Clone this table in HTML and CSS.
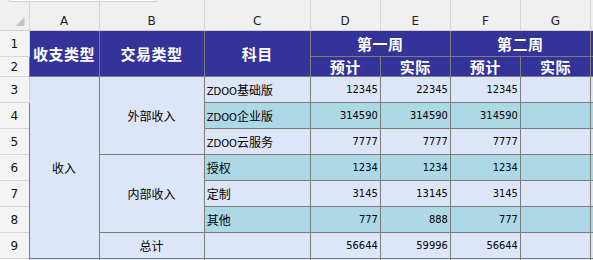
FILE: index.html
```html
<!DOCTYPE html>
<html lang="zh-CN">
<head>
<meta charset="utf-8">
<title>收支表</title>
<link rel="stylesheet" href="styles.css">
</head>
<body>
<div class="sheet">
  <div class="namebox"></div>
  <table class="grid">
    <colgroup>
      <col class="w-rh"><col class="w-a"><col class="w-b"><col class="w-c"><col class="w-n"><col class="w-n"><col class="w-n"><col class="w-n"><col class="w-n">
    </colgroup>
    <thead>
      <tr class="colhead">
        <th class="corner"><div class="corner-in"><span class="tri"></span></div></th>
        <th>A</th><th>B</th><th>C</th><th>D</th><th>E</th><th>F</th><th>G</th><th></th>
      </tr>
    </thead>
    <tbody>
      <tr class="r1">
        <th class="rh">1</th>
        <td class="hd" rowspan="2">收支类型</td>
        <td class="hd" rowspan="2">交易类型</td>
        <td class="hd" rowspan="2">科目</td>
        <td class="hd" colspan="2">第一周</td>
        <td class="hd" colspan="2">第二周</td>
        <td class="hd"></td>
      </tr>
      <tr class="r2">
        <th class="rh">2</th>
        <td class="hd">预计</td><td class="hd">实际</td><td class="hd">预计</td><td class="hd">实际</td><td class="hd"></td>
      </tr>
      <tr class="row lav">
        <th class="rh">3</th>
        <td class="mg" rowspan="7">收入</td>
        <td class="mg" rowspan="3">外部收入</td>
        <td class="t"><span class="lat">ZDOO</span>基础版</td>
        <td class="n">12345</td><td class="n">22345</td><td class="n">12345</td><td></td><td></td>
      </tr>
      <tr class="row blu">
        <th class="rh">4</th>
        <td class="t"><span class="lat">ZDOO</span>企业版</td>
        <td class="n">314590</td><td class="n">314590</td><td class="n">314590</td><td></td><td></td>
      </tr>
      <tr class="row lav">
        <th class="rh">5</th>
        <td class="t"><span class="lat">ZDOO</span>云服务</td>
        <td class="n">7777</td><td class="n">7777</td><td class="n">7777</td><td></td><td></td>
      </tr>
      <tr class="row blu">
        <th class="rh">6</th>
        <td class="mg" rowspan="3">内部收入</td>
        <td class="t">授权</td>
        <td class="n">1234</td><td class="n">1234</td><td class="n">1234</td><td></td><td></td>
      </tr>
      <tr class="row lav">
        <th class="rh">7</th>
        <td class="t">定制</td>
        <td class="n">3145</td><td class="n">13145</td><td class="n">3145</td><td></td><td></td>
      </tr>
      <tr class="row blu">
        <th class="rh">8</th>
        <td class="t">其他</td>
        <td class="n">777</td><td class="n">888</td><td class="n">777</td><td></td><td></td>
      </tr>
      <tr class="row lav">
        <th class="rh">9</th>
        <td class="mg">总计</td>
        <td class="t"></td>
        <td class="n">56644</td><td class="n">59996</td><td class="n">56644</td><td></td><td></td>
      </tr>
      <tr class="row lav">
        <th class="rh"></th>
        <td class="mg"></td><td class="mg"></td><td></td><td></td><td></td><td></td><td></td><td></td>
      </tr>
    </tbody>
  </table>
</div>
</body>
</html>
```
FILE: styles.css
```css
html, body {
  margin: 0;
  padding: 0;
  background: #ffffff;
  overflow: hidden;
}

.sheet {
  position: relative;
  width: 593px;
  height: 260px;
  overflow: hidden;
  background: #f0f0f0;
}

.namebox {
  position: absolute;
  left: 9px;
  top: -10px;
  width: 146px;
  height: 10px;
  background: #ffffff;
  border: 1px solid #cfcfcf;
}

.grid {
  border-collapse: collapse;
  table-layout: fixed;
  width: 661px;
  font-family: "Noto Sans CJK SC", sans-serif;
  font-size: 12px;
  color: #000;
}

.w-rh { width: 29px; }
.w-a { width: 70px; }
.w-b { width: 105px; }
.w-c { width: 106px; }
.w-n { width: 70px; }

.colhead th {
  height: 28px;
  padding: 0 0 2px 0;
  vertical-align: bottom;
  background: #f0f0f0;
  border: 1px solid #d6d6d6;
  border-top: none;
  border-bottom: 1px solid #d0d0d0;
  font-family: "DejaVu Sans", sans-serif;
  font-weight: normal;
  font-size: 12px;
  line-height: 14px;
  color: #222;
}

.colhead th.corner {
  border-left: none;
  vertical-align: bottom;
  padding: 0;
}

.corner-in {
  display: flex;
  justify-content: flex-end;
  align-items: flex-end;
  padding: 0 4px 4px 0;
}

.tri {
  display: block;
  width: 9px;
  height: 9px;
  background: #c4c4c4;
  clip-path: polygon(100% 0, 100% 100%, 0 100%);
}

.rh {
  background: #f4f4f4;
  border: 1px solid #d6d6d6;
  border-left: none;
  border-right: 1px solid #c6cbd6;
  font-family: "DejaVu Sans", sans-serif;
  font-weight: normal;
  font-size: 12px;
  color: #111;
  padding: 0;
  text-align: center;
}

.r1 th, .r1 td { height: 25px; }
.r2 th, .r2 td { height: 19px; }
.row th, .row td { height: 25px; }

td {
  border: 1px solid #7c7c7c;
  padding: 0;
  white-space: nowrap;
  overflow: hidden;
}

td.hd {
  background: #333399;
  color: #ffffff;
  font-weight: bold;
  font-size: 15px;
  letter-spacing: 0.5px;
  text-align: center;
  line-height: 18px;
}

.lav td { background: #dde6f9; }
.blu td { background: #add8e6; }
td.mg {
  background: #dde6f9;
  text-align: center;
}

td.t {
  text-align: left;
  padding-left: 2px;
}

.lat {
  font-family: "DejaVu Sans", sans-serif;
  font-size: 10px;
}

td.n {
  text-align: right;
  padding-right: 2px;
  font-family: "DejaVu Sans Condensed", "DejaVu Sans", sans-serif;
  font-size: 11px;
}
```
